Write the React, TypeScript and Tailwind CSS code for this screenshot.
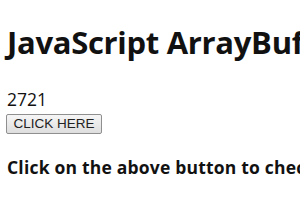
export default function App() {
  return (
    <div className="min-h-screen overflow-hidden bg-white text-[#111] px-[7px] pt-[22px] font-['Open_Sans','Noto_Sans',sans-serif]">
      <h1 className="text-[31px] font-bold leading-[40px] tracking-[-0.3px] whitespace-nowrap">
        JavaScript ArrayBuffer byteLength Property
      </h1>
      <div className="mt-[26px] text-[17.5px] leading-[22px]">2721</div>
      <button className="mt-[1px] h-[20px] w-[96px] -ml-px border border-[#8f8f8f] rounded-[2px] bg-gradient-to-b from-[#f6f6f6] to-[#dedede] text-[13.5px] leading-[18px] text-[#222] font-['Liberation_Sans',Arial,sans-serif]">
        CLICK HERE
      </button>
      <p className="mt-[22px] text-[17.5px] font-bold leading-[22px] tracking-[0.2px] whitespace-nowrap">
        Click on the above button to check the byteLength
      </p>
    </div>
  );
}
